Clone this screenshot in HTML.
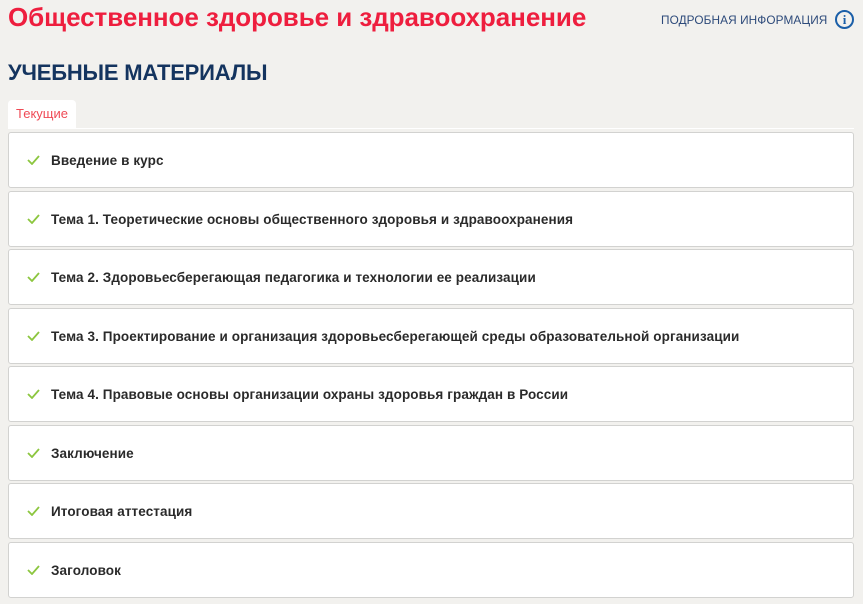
<!DOCTYPE html>
<html><head><meta charset="utf-8"><style>
body{margin:0;width:863px;height:604px;background:#f2f1ee;font-family:"Liberation Sans","DejaVu Sans",sans-serif;position:relative;overflow:hidden}
.t{position:absolute;left:8px;top:2px;font-size:26px;font-weight:bold;color:#ee1e3e;white-space:nowrap;letter-spacing:-0.05px}
.info{position:absolute;left:661px;top:13px;font-size:11.8px;color:#2d4a7a;letter-spacing:0.1px}
.ic{position:absolute;left:835px;top:10px;width:19px;height:19px;border:2px solid #1b5fa8;border-radius:50%;box-sizing:border-box;color:#1b5fa8;font-weight:bold;font-size:13px;text-align:center;line-height:15px;font-family:"Liberation Serif",serif}
.h{position:absolute;left:8px;top:60px;font-size:22px;font-weight:bold;color:#14345f;letter-spacing:-0.2px}
.tab{position:absolute;left:8px;top:100px;width:68px;height:28px;background:#fff;border-radius:4px 4px 0 0;color:#ef4a55;font-size:13px;text-align:center;line-height:28px}
.line{position:absolute;left:8px;top:128px;width:846px;height:1px;background:#fff}
.b{position:absolute;left:8px;width:844px;height:54px;background:#fff;border:1px solid #d2d2d0;border-radius:3px}
.b span{position:absolute;left:42px;top:20px;font-size:13.5px;font-weight:bold;color:#2a2a2a;white-space:nowrap;letter-spacing:0.1px}
.b svg{position:absolute;left:18px;top:22px}
</style></head><body>
<div class="t">Общественное здоровье и здравоохранение</div>
<div class="info">ПОДРОБНАЯ ИНФОРМАЦИЯ</div>
<div class="ic">i</div>
<div class="h">УЧЕБНЫЕ МАТЕРИАЛЫ</div>
<div class="tab">Текущие</div>
<div class="line"></div>
<div class="b" style="top:132px"><svg width="13" height="10"><path d="M1 5l4 4 7-8" stroke="#8cc63f" stroke-width="1.8" fill="none"/></svg><span>Введение в курс</span></div>
<div class="b" style="top:191px"><svg width="13" height="10"><path d="M1 5l4 4 7-8" stroke="#8cc63f" stroke-width="1.8" fill="none"/></svg><span>Тема 1. Теоретические основы общественного здоровья и здравоохранения</span></div>
<div class="b" style="top:249px"><svg width="13" height="10"><path d="M1 5l4 4 7-8" stroke="#8cc63f" stroke-width="1.8" fill="none"/></svg><span>Тема 2. Здоровьесберегающая педагогика и технологии ее реализации</span></div>
<div class="b" style="top:308px"><svg width="13" height="10"><path d="M1 5l4 4 7-8" stroke="#8cc63f" stroke-width="1.8" fill="none"/></svg><span>Тема 3. Проектирование и организация здоровьесберегающей среды образовательной организации</span></div>
<div class="b" style="top:366px"><svg width="13" height="10"><path d="M1 5l4 4 7-8" stroke="#8cc63f" stroke-width="1.8" fill="none"/></svg><span>Тема 4. Правовые основы организации охраны здоровья граждан в России</span></div>
<div class="b" style="top:425px"><svg width="13" height="10"><path d="M1 5l4 4 7-8" stroke="#8cc63f" stroke-width="1.8" fill="none"/></svg><span>Заключение</span></div>
<div class="b" style="top:483px"><svg width="13" height="10"><path d="M1 5l4 4 7-8" stroke="#8cc63f" stroke-width="1.8" fill="none"/></svg><span>Итоговая аттестация</span></div>
<div class="b" style="top:542px"><svg width="13" height="10"><path d="M1 5l4 4 7-8" stroke="#8cc63f" stroke-width="1.8" fill="none"/></svg><span>Заголовок</span></div>
</body></html>
